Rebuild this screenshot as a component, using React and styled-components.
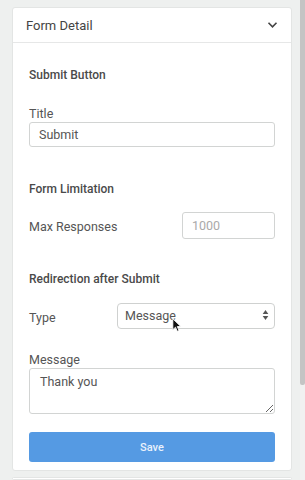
import React from 'react';
import styled, { createGlobalStyle } from 'styled-components';

const GlobalStyle = createGlobalStyle`
  html, body {
    margin: 0;
    padding: 0;
    background: #eef0ef;
    font-family: Roboto, "Liberation Sans", sans-serif;
    overflow: hidden;
  }
`;

const Page = styled.div`
  display: flex;
  height: 480px;
  width: 305px;
`;

const Main = styled.div`
  flex: 1;
  padding: 7px 8px 0 12px;
  display: flex;
  flex-direction: column;
  gap: 6px;
`;

const ScrollTrack = styled.div`
  width: 5px;
  background: #f1f1f1;
  display: flex;
  flex-direction: column;
`;

const ScrollThumb = styled.div`
  height: 385px;
  background: #c4c4c4;
  border-radius: 0 0 2px 2px;
`;

const Card = styled.div`
  background: #fff;
  border: 1px solid #e3e5e4;
  border-radius: 3px;
  box-sizing: border-box;
  position: relative;
`;

const Header = styled.div`
  height: 34px;
  display: flex;
  align-items: center;
  justify-content: space-between;
  padding: 0 13px 0 13px;
  border-bottom: 1px solid #e6e7e7;
  font-size: 13px;
  color: #444;
`;

const Body = styled.div`
  padding: 24px 16px 8px 16px;
  display: flex;
  flex-direction: column;
`;

const SectionTitle = styled.div`
  font-size: 12px;
  font-weight: 500;
  color: #4a4a4a;
  line-height: 16px;
  margin-top: ${p => p.$top || 0}px;
`;

const Label = styled.div`
  font-size: 12.5px;
  color: #555;
  line-height: 16px;
  margin-top: ${p => p.$top || 0}px;
`;

const TextInput = styled.input`
  box-sizing: border-box;
  width: ${p => p.$width || '100%'};
  height: ${p => p.$height || 25}px;
  border: 1px solid #d2d4d3;
  border-radius: 3px;
  padding: 0 9px;
  font-family: inherit;
  font-size: 12.5px;
  color: #555;
  outline: none;
  &::placeholder {
    color: #aaa;
  }
`;

const Row = styled.div`
  display: flex;
  align-items: center;
  justify-content: space-between;
  margin-top: ${p => p.$top || 0}px;
`;

const RowLabel = styled.div`
  font-size: 12.5px;
  color: #555;
  width: ${p => p.$width || 'auto'};
  padding-top: ${p => p.$shift || 0}px;
`;

const SelectBox = styled.div`
  flex: 1;
  box-sizing: border-box;
  height: 26px;
  border: 1px solid #cfd1d0;
  border-radius: 4px;
  display: flex;
  align-items: center;
  justify-content: space-between;
  padding: 0 5px 2px 7px;
  font-size: 12.5px;
  color: #555;
  position: relative;
`;

const TextArea = styled.textarea`
  box-sizing: border-box;
  width: 100%;
  height: 46px;
  border: 1px solid #d2d4d3;
  border-radius: 3px;
  padding: 5px 10px;
  font-family: inherit;
  font-size: 12.5px;
  color: #555;
  resize: vertical;
  outline: none;
`;

const SaveButton = styled.button`
  margin-top: 18px;
  height: 30px;
  border: none;
  border-radius: 3px;
  background: #559ae3;
  color: #e9f1fc;
  font-family: inherit;
  font-size: 11px;
  font-weight: 500;
`;

const Cursor = styled.svg`
  position: absolute;
  left: 54px;
  top: 14px;
`;

const Chevron = () => (
  <svg width="11" height="8" viewBox="0 0 11 8">
    <path d="M1.5 1.8 L5.5 5.8 L9.5 1.8" fill="none" stroke="#444" strokeWidth="1.6" />
  </svg>
);

const UpDown = () => (
  <svg width="7" height="12" viewBox="0 0 7 12">
    <path d="M3.5 1 L6.3 5 H0.7 Z" fill="#555" />
    <path d="M3.5 11 L6.3 7 H0.7 Z" fill="#555" />
  </svg>
);

const App = () => {
  return (
    <>
      <GlobalStyle />
      <Page>
        <Main>
          <Card>
            <Header>
              <span>Form Detail</span>
              <Chevron />
            </Header>
            <Body>
              <SectionTitle>Submit Button</SectionTitle>
              <Label $top={23}>Title</Label>
              <TextInput defaultValue="Submit" />

              <SectionTitle $top={34}>Form Limitation</SectionTitle>
              <Row $top={15}>
                <RowLabel $shift={2}>Max Responses</RowLabel>
                <TextInput $width="93px" $height={27} placeholder="1000" />
              </Row>

              <SectionTitle $top={32}>Redirection after Submit</SectionTitle>
              <Row $top={16}>
                <RowLabel $width="88px" $shift={3}>Type</RowLabel>
                <SelectBox>
                  <span>Message</span>
                  <UpDown />
                  <Cursor width="10" height="15" viewBox="0 0 12 18">
                    <path d="M1 1 L1 14 L4.2 11 L6.4 16 L8.4 15.1 L6.3 10.2 L10.5 10.2 Z" fill="#111" stroke="#fff" strokeWidth="1" />
                  </Cursor>
                </SelectBox>
              </Row>

              <Label $top={23}>Message</Label>
              <TextArea defaultValue="Thank you" />

              <SaveButton>Save</SaveButton>
            </Body>
          </Card>
          <Card style={{ height: 20 }} />
        </Main>
        <ScrollTrack>
          <ScrollThumb />
        </ScrollTrack>
      </Page>
    </>
  );
};

export default App;
